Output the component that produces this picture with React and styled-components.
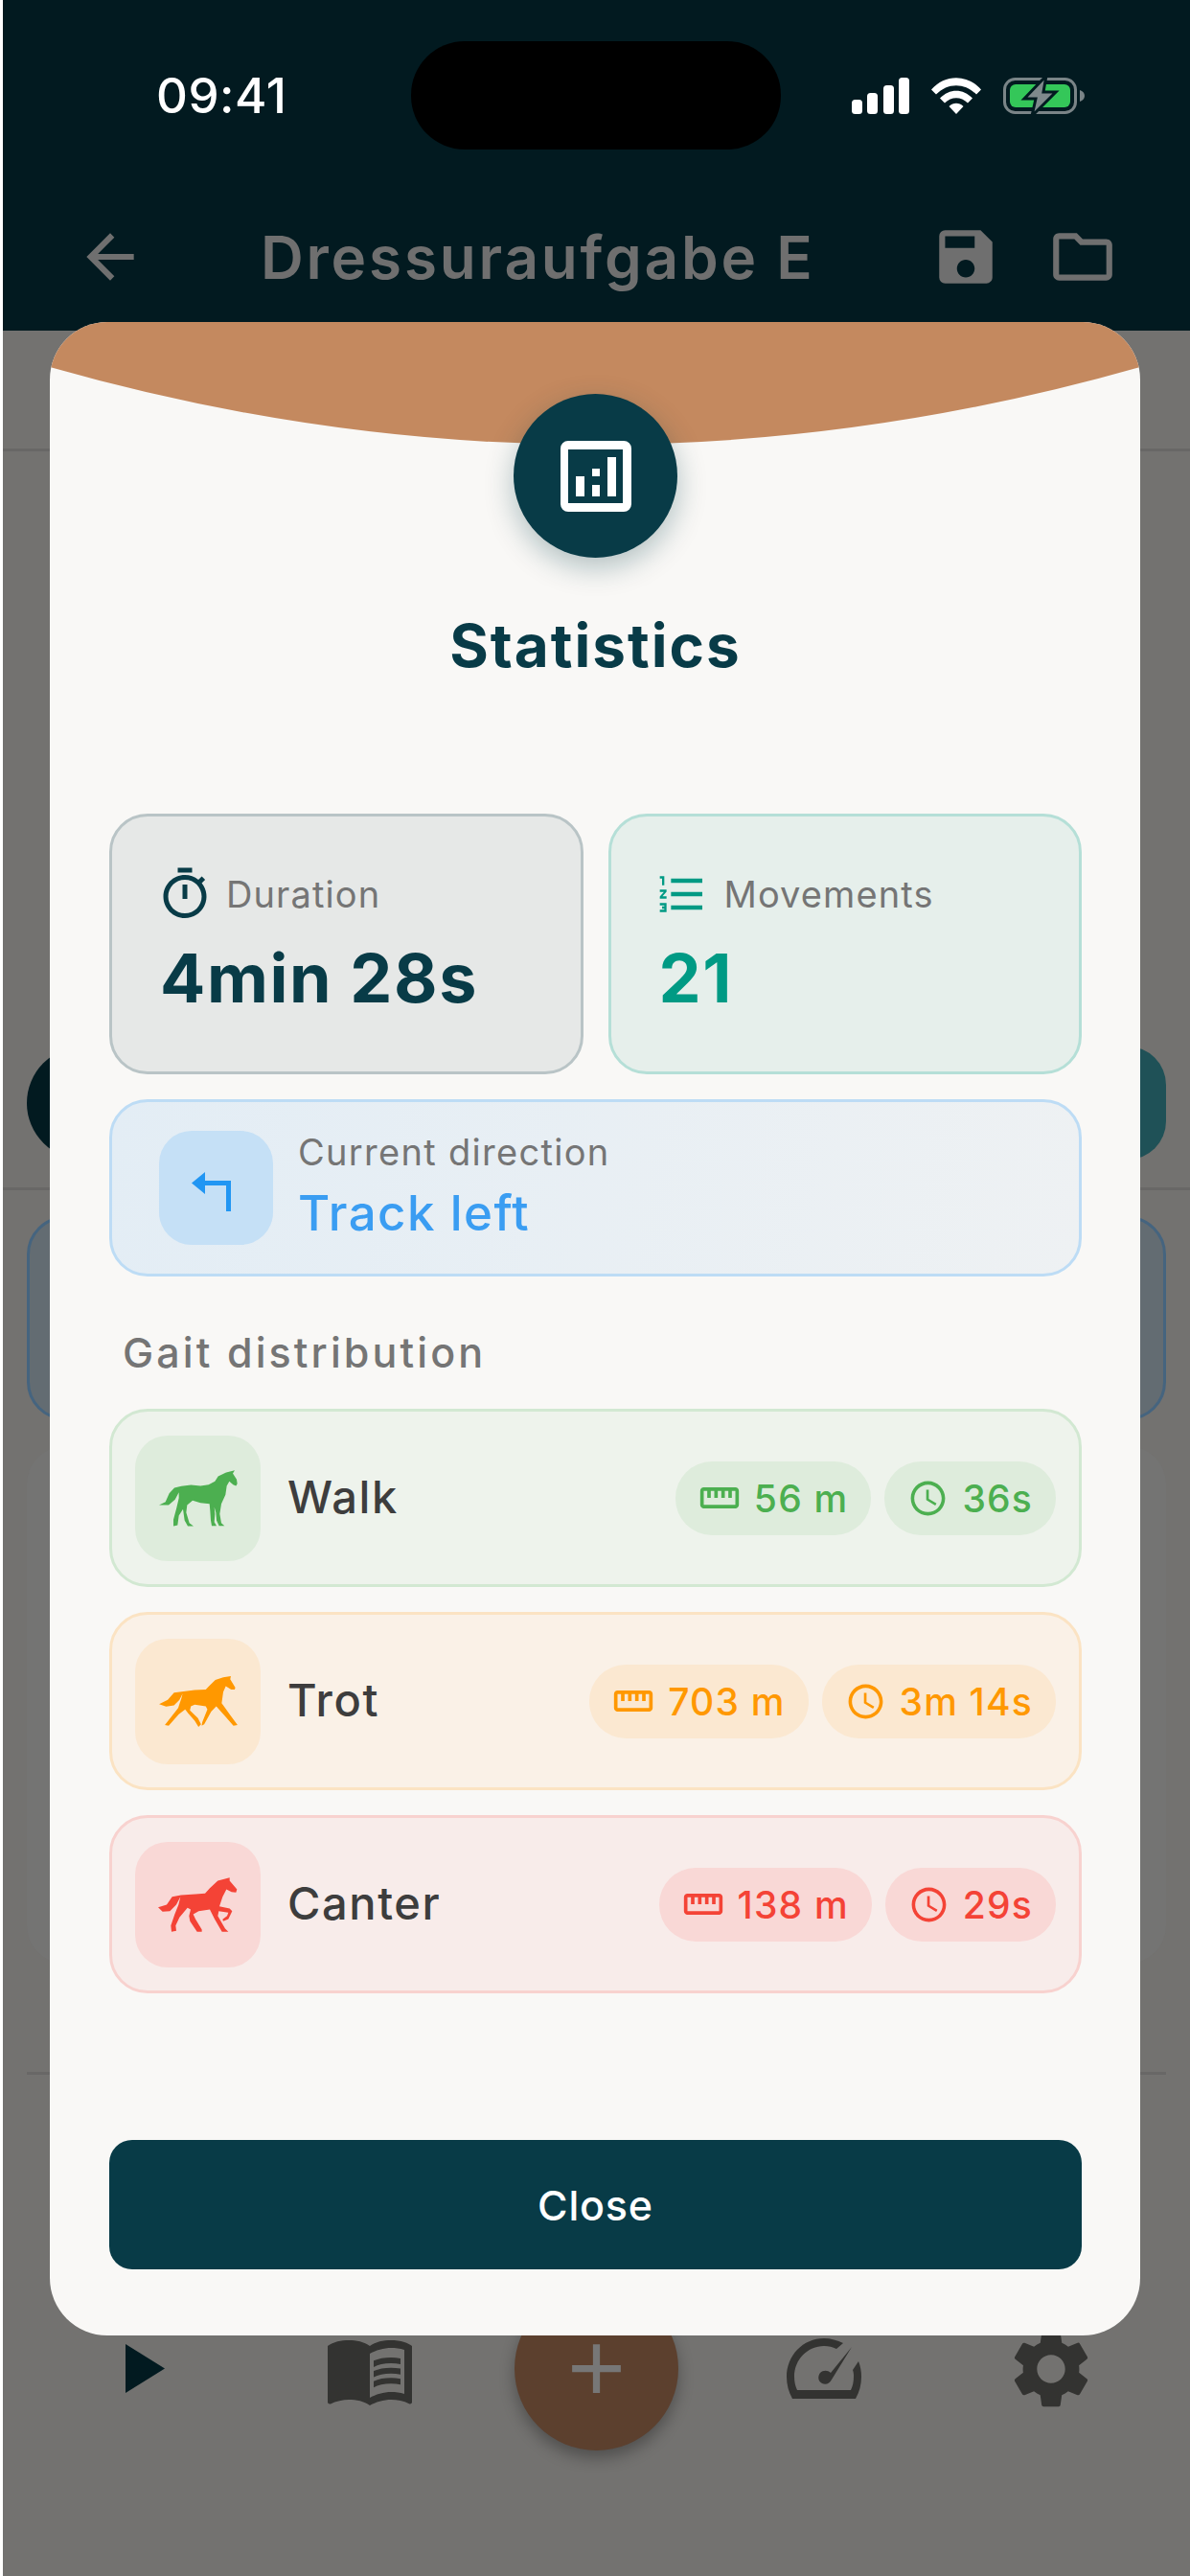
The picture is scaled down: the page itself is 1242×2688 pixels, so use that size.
import styled, { createGlobalStyle } from "styled-components";
import {
  MdArrowBack,
  MdSave,
  MdOutlineFolder,
  MdMenuBook,
  MdSettings,
  MdAdd,
  MdOutlineTimer,
  MdFormatListNumbered,
  MdOutlineStraighten,
  MdOutlineAccessTime,
} from "react-icons/md";

const GlobalStyle = createGlobalStyle`
  html, body { margin: 0; padding: 0; background: #fff; }
  * { box-sizing: border-box; }
  body { font-family: Inter, "Noto Sans", sans-serif; }
`;

// --- horses, traced one by one ---
const HORSES = {
  walk: {
    box: "110 163 246 176",
    w: 82,
    h: 59,
    d: "M110 272 L130 262 L142 235 L158 218 L180 213 L210 209 L240 212 L265 208 L285 198 L295 182 L320 170 L347 163 L341 173 L353 192 L355 205 L351 212 L342 208 L330 198 L322 212 L318 240 L305 268 L300 300 L305 328 L315 337 L298 337 L290 320 L288 295 L283 278 L285 300 L283 325 L290 337 L275 337 L272 320 L270 290 L268 268 L240 265 L215 258 L198 272 L195 295 L205 328 L218 338 L200 338 L190 320 L185 285 L172 305 L168 335 L155 338 L155 318 L165 280 L172 250 L172 232 L160 255 L140 272 Z",
  },
  trot: {
    box: "48 60 247 160",
    w: 82,
    h: 53,
    d: "M48 148 L75 135 L95 112 L125 108 L160 104 L195 102 L205 92 L225 72 L250 64 L274 60 L272 70 L288 96 L286 102 L275 102 L258 92 L250 110 L245 145 L270 180 L295 214 L282 216 L255 185 L228 155 L212 172 L190 212 L182 216 L184 205 L200 165 L195 155 L160 150 L148 155 L145 168 L170 192 L180 212 L172 220 L160 200 L140 178 L130 165 L110 180 L78 216 L66 214 L85 190 L108 160 L118 130 L122 115 L112 135 L95 152 L70 156 Z",
  },
  canter: {
    box: "48 685 249 170",
    w: 83,
    h: 57,
    d: "M48 778 L75 770 L92 745 L120 740 L165 737 L195 735 L210 718 L235 695 L272 685 L272 695 L295 722 L292 732 L278 730 L262 722 L250 745 L240 775 L272 782 L280 790 L268 815 L252 822 L250 816 L264 805 L268 795 L238 790 L235 805 L258 845 L268 855 L248 855 L225 815 L210 785 L175 790 L158 800 L165 815 L185 848 L185 855 L170 855 L148 822 L145 805 L150 785 L140 780 L115 810 L103 835 L105 852 L90 855 L88 835 L100 800 L112 770 L118 745 L105 770 L85 790 L62 792 Z",
  },
};

const HorseIcon = ({ gait }) => {
  const horse = HORSES[gait];
  return (
    <svg width={horse.w} height={horse.h} viewBox={horse.box} fill="currentColor">
      <path d={horse.d} />
    </svg>
  );
};

const SignalIcon = () => (
  <svg width="60" height="38" viewBox="0 0 60 38" fill="#fff">
    <rect x="0" y="23" width="11" height="15" rx="3.5" />
    <rect x="16" y="16" width="11" height="22" rx="3.5" />
    <rect x="33" y="8" width="11" height="30" rx="3.5" />
    <rect x="49" y="0" width="11" height="38" rx="3.5" />
  </svg>
);

const WifiIcon = () => (
  <svg width="52" height="38" viewBox="0 0 52 38" fill="#fff">
    <path d="M0 12.5 C14 -4 38 -4 52 12.5 L47 17.5 C35 5 17 5 5 17.5 Z" />
    <path d="M9 21.5 C19 11 33 11 43 21.5 L38 26.5 C31 19.5 21 19.5 14 26.5 Z" />
    <path d="M18.5 30 C23 25.8 29 25.8 33.5 30 L26 38 Z" />
  </svg>
);

const BatteryIcon = () => (
  <svg width="85" height="42" viewBox="0 0 85 42">
    <rect x="1.5" y="3.5" width="74" height="35" rx="11" fill="none" stroke="#7a8487" strokeWidth="3" />
    <rect x="7" y="9" width="63" height="24" rx="6" fill="#34c759" />
    <path d="M80 15 C83 16 85 18 85 21 C85 24 83 26 80 27 Z" fill="#7a8487" />
    <path d="M45 0 L22 24 H34 L30 42 L55 17 H42 Z" fill="#7f898c" stroke="#021a20" strokeWidth="3" />
  </svg>
);

const ChartIcon = () => (
  <svg width="74" height="74" viewBox="0 0 74 74" fill="#fff">
    <path
      fillRule="evenodd"
      d="M8 0 H66 A8 8 0 0 1 74 8 V66 A8 8 0 0 1 66 74 H8 A8 8 0 0 1 0 66 V8 A8 8 0 0 1 8 0 Z M8 9 V65 H65 V9 Z"
    />
    <rect x="16" y="37" width="9" height="21" />
    <rect x="33" y="29" width="8" height="8" />
    <rect x="33" y="46" width="8" height="12" />
    <rect x="49" y="17" width="9" height="41" />
  </svg>
);

const TurnIcon = () => (
  <svg width="41" height="41" viewBox="0 0 41 41" fill="currentColor">
    <path d="M41 41 H36 V14 H14 V23 L0 11.5 L14 0 V9 H41 Z" />
  </svg>
);

const PlayIcon = () => (
  <svg width="41" height="51" viewBox="0 0 41 51" fill="#021a20">
    <path d="M0 0 L41 25.5 L0 51 Z" />
  </svg>
);

const GaugeIcon = () => (
  <svg width="78" height="64" viewBox="0 0 78 64" fill="#333331">
    <path d="M39 0 C17 0 0 18 0 40 C0 48 2 56 6 63 H72 C76 56 78 48 78 40 C78 34 77 29 75 24 L69 33 C70 36 70 38 70 40 C70 45 69 50 67 54 H11 C9 50 8 45 8 40 C8 22 22 8 39 8 C44 8 48 9 52 11 L59 5 C53 2 46 0 39 0 Z" />
    <path d="M68 9 L46 36 C43 33 38 33 35 36 C32 40 33 45 37 47 C41 49 45 47 47 43 Z" />
  </svg>
);

const GAITS = [
  { key: "walk", name: "Walk", dist: "56 m", time: "36s", tone: "green" },
  { key: "trot", name: "Trot", dist: "703 m", time: "3m 14s", tone: "orange" },
  { key: "canter", name: "Canter", dist: "138 m", time: "29s", tone: "red" },
];

const App = () => (
  <Page>
    <GlobalStyle />
    <Screen>
      <TopBar>
        <StatusBar>
          <Time>09:41</Time>
          <Notch />
          <StatusIcons>
            <SignalIcon />
            <WifiIcon />
            <BatteryIcon />
          </StatusIcons>
        </StatusBar>
        <AppBar>
          <MdArrowBack size={74} />
          <AppTitle>Dressuraufgabe E</AppTitle>
          <AppActions>
            <MdSave size={74} />
            <MdOutlineFolder size={74} />
          </AppActions>
        </AppBar>
      </TopBar>

      {/* what is left visible of the page behind the dialog */}
      <Backdrop>
        <TabStrip />
        <ControlRow>
          <DarkPill />
          <TealPill />
        </ControlRow>
        <RowLine />
        <BlueCard />
        <FaintCard />
        <NavLine />
        <BottomNav>
          <NavSlot $shift={5}>
            <PlayIcon />
          </NavSlot>
          <NavSlot $color="#333331">
            <MdMenuBook size={96} />
          </NavSlot>
          <NavSlot>
            <Fab>
              <MdAdd size={87} />
            </Fab>
          </NavSlot>
          <NavSlot>
            <GaugeIcon />
          </NavSlot>
          <NavSlot $color="#333331">
            <MdSettings size={98} />
          </NavSlot>
        </BottomNav>
      </Backdrop>

      <Dialog>
        <Cap viewBox="0 0 1138 128" preserveAspectRatio="none">
          <path d="M0 0 H1138 V47 Q569 209 0 47 Z" fill="#c4895f" />
        </Cap>
        <Badge>
          <ChartIcon />
        </Badge>
        <DialogTitle>Statistics</DialogTitle>

        <StatGrid>
          <StatCard $bg="#e6e8e7" $border="#b9c4c6">
            <StatLabel>
              <IconTint $color="#083b47">
                <MdOutlineTimer size={60} />
              </IconTint>
              Duration
            </StatLabel>
            <StatValue $color="#083b47">4min 28s</StatValue>
          </StatCard>
          <StatCard $bg="#e6efeb" $border="#b5dfd7">
            <StatLabel>
              <IconTint $color="#009a84" $gap={3}>
                <MdFormatListNumbered size={56} />
              </IconTint>
              Movements
            </StatLabel>
            <StatValue $color="#009a84">21</StatValue>
          </StatCard>
        </StatGrid>

        <DirectionCard>
          <DirectionBox>
            <TurnIcon />
          </DirectionBox>
          <div>
            <DirectionLabel>Current direction</DirectionLabel>
            <DirectionValue>Track left</DirectionValue>
          </div>
        </DirectionCard>

        <SectionTitle>Gait distribution</SectionTitle>
        <GaitList>
          {GAITS.map((g) => (
            <GaitRow key={g.key} $tone={g.tone}>
              <GaitBox $tone={g.tone}>
                <HorseIcon gait={g.key} />
              </GaitBox>
              <GaitName>{g.name}</GaitName>
              <Pill $tone={g.tone}>
                <MdOutlineStraighten size={44} />
                {g.dist}
              </Pill>
              <Pill $tone={g.tone}>
                <MdOutlineAccessTime size={43} />
                {g.time}
              </Pill>
            </GaitRow>
          ))}
        </GaitList>

        <CloseButton>Close</CloseButton>
      </Dialog>
    </Screen>
  </Page>
);

export default App;

// --- Styled Components ---

const TONES = {
  green: { row: "#eef3ec", border: "#d2e8d2", soft: "#deecdc", main: "#4caf50" },
  orange: { row: "#faf1e7", border: "#fbe3c3", soft: "#fbe8d1", main: "#ff9800" },
  red: { row: "#f8ecea", border: "#f8d2cf", soft: "#f9d8d6", main: "#f44336" },
};

const Page = styled.div`
  width: 1242px;
  height: 2688px;
  padding-left: 3px;
  background: #fff;
  overflow: hidden;
`;

const Screen = styled.div`
  position: relative;
  height: 100%;
  background: #737270;
`;

const TopBar = styled.header`
  height: 345px;
  padding-top: 43px;
  background: #021a20;
  color: #6f6f6f;
`;

const StatusBar = styled.div`
  display: flex;
  align-items: center;
  height: 113px;
  padding-left: 160px;
`;

const Time = styled.span`
  width: 266px;
  color: #fff;
  font-size: 51px;
  font-weight: 500;
  letter-spacing: 0.5px;
`;

const Notch = styled.div`
  width: 386px;
  height: 113px;
  border-radius: 56px;
  background: #000;
`;

const StatusIcons = styled.div`
  display: flex;
  align-items: center;
  gap: 23px;
  margin-left: 74px;
`;

const AppBar = styled.div`
  display: flex;
  align-items: center;
  padding: 0 75px;
  margin-top: 75px;
  height: 74px;
`;

const AppTitle = styled.h1`
  margin: 0 0 0 120px;
  font-size: 62px;
  font-weight: 600;
  letter-spacing: 2.8px;
  white-space: nowrap;
`;

const AppActions = styled.div`
  display: flex;
  gap: 48px;
  margin-left: auto;
`;

const Backdrop = styled.div`
  display: flex;
  flex-direction: column;
  padding: 0 25px;
`;

const TabStrip = styled.div`
  height: 126px;
  margin: 0 -25px;
  border-bottom: 3px solid #686766;
`;

const ControlRow = styled.div`
  display: flex;
  justify-content: space-between;
  margin-top: 621px;
`;

const DarkPill = styled.div`
  width: 300px;
  height: 118px;
  border-radius: 59px;
  background: #021a20;
`;

const TealPill = styled.div`
  width: 300px;
  height: 118px;
  border-radius: 40px;
  background: #1f5157;
`;

const RowLine = styled.div`
  height: 3px;
  margin: 29px -25px 0;
  background: #686766;
`;

const BlueCard = styled.div`
  height: 213px;
  margin-top: 27px;
  border: 3px solid #45647f;
  border-radius: 40px;
  background: #636c72;
`;

const FaintCard = styled.div`
  height: 540px;
  margin-top: 27px;
  border-radius: 40px;
  background: #747473;
`;

const NavLine = styled.div`
  height: 3px;
  margin-top: 113px;
  background: #686766;
`;

const BottomNav = styled.nav`
  display: grid;
  grid-template-columns: repeat(5, 237px);
  height: 171px;
  margin: 221px 0 0 2px;
`;

const NavSlot = styled.div`
  display: flex;
  align-items: center;
  justify-content: center;
  padding-left: ${(p) => p.$shift || 0}px;
  color: ${(p) => p.$color || "#777"};
`;

const Fab = styled.div`
  display: flex;
  align-items: center;
  justify-content: center;
  width: 171px;
  height: 171px;
  border-radius: 50%;
  background: #5c402e;
  color: #777;
  box-shadow: 0 8px 16px rgba(0, 0, 0, 0.3);
`;

const Dialog = styled.section`
  position: absolute;
  top: 336px;
  left: 49px;
  width: 1138px;
  height: 2101px;
  display: flex;
  flex-direction: column;
  align-items: center;
  padding: 75px 61px 0 62px;
  border-radius: 60px;
  background: #f9f8f6;
  overflow: hidden;
`;

const Cap = styled.svg`
  position: absolute;
  top: 0;
  left: 0;
  width: 100%;
  height: 128px;
`;

const Badge = styled.div`
  position: relative;
  display: flex;
  flex-shrink: 0;
  align-items: center;
  justify-content: center;
  width: 171px;
  height: 171px;
  border-radius: 50%;
  background: #083b47;
  box-shadow: 0 10px 30px rgba(8, 59, 71, 0.3);
`;

const DialogTitle = styled.h2`
  margin: 56px 0 0;
  color: #083b47;
  font-size: 62px;
  line-height: 72px;
  font-weight: 700;
  letter-spacing: 2px;
`;

const StatGrid = styled.div`
  display: grid;
  grid-template-columns: 1fr 1fr;
  gap: 26px;
  width: 100%;
  margin-top: 139px;
`;

const StatCard = styled.div`
  height: 272px;
  padding: 51px 0 0 50px;
  border: 3px solid ${(p) => p.$border};
  border-radius: 40px;
  background: ${(p) => p.$bg};
`;

const StatLabel = styled.div`
  display: flex;
  align-items: center;
  gap: 13px;
  height: 60px;
  margin-left: -4px;
  color: #757575;
  font-size: 38px;
  letter-spacing: 1.1px;
`;

const IconTint = styled.span`
  display: flex;
  margin-right: ${(p) => p.$gap || 0}px;
  color: ${(p) => p.$color};
`;

const StatValue = styled.div`
  margin-top: 17px;
  color: ${(p) => p.$color};
  font-size: 70px;
  line-height: 82px;
  font-weight: 700;
  letter-spacing: 1.6px;
`;

const DirectionCard = styled.div`
  display: flex;
  align-items: center;
  gap: 26px;
  width: 100%;
  height: 185px;
  margin-top: 26px;
  padding-left: 49px;
  border: 3px solid #bddcf5;
  border-radius: 40px;
  background: linear-gradient(100deg, #e3edf5, #eef1f3);
`;

const DirectionBox = styled.div`
  display: flex;
  align-items: center;
  justify-content: center;
  width: 119px;
  height: 119px;
  padding: 8px 10px 0 0;
  border-radius: 34px;
  background: #c5e0f6;
  color: #2196f3;
`;

const DirectionLabel = styled.div`
  margin-top: -4px;
  color: #757575;
  font-size: 38px;
  line-height: 44px;
  letter-spacing: 1.3px;
`;

const DirectionValue = styled.div`
  margin-top: 12px;
  color: #3a9df2;
  font-size: 51px;
  line-height: 60px;
  font-weight: 500;
  letter-spacing: 1.4px;
`;

const SectionTitle = styled.h3`
  align-self: flex-start;
  margin: 54px 0 0 14px;
  color: #757575;
  font-size: 43px;
  line-height: 50px;
  font-weight: 500;
  letter-spacing: 3.1px;
`;

const GaitList = styled.div`
  display: flex;
  flex-direction: column;
  gap: 26px;
  width: 100%;
  margin-top: 34px;
`;

const GaitRow = styled.div`
  display: flex;
  align-items: center;
  gap: 14px;
  height: 186px;
  padding: 0 24px;
  border: 3px solid ${(p) => TONES[p.$tone].border};
  border-radius: 40px;
  background: ${(p) => TONES[p.$tone].row};
`;

const GaitBox = styled.div`
  display: flex;
  flex-shrink: 0;
  align-items: center;
  justify-content: center;
  width: 131px;
  height: 131px;
  border-radius: 34px;
  background: ${(p) => TONES[p.$tone].soft};
  color: ${(p) => TONES[p.$tone].main};
`;

const GaitName = styled.span`
  flex: 1;
  margin: -4px 0 0 14px;
  color: #3d3d3d;
  font-size: 47px;
  font-weight: 500;
  letter-spacing: 1.6px;
`;

const Pill = styled.span`
  display: flex;
  align-items: center;
  gap: 14px;
  height: 77px;
  padding: 0 24px;
  border-radius: 38px;
  background: ${(p) => TONES[p.$tone].soft};
  color: ${(p) => TONES[p.$tone].main};
  font-size: 39px;
  font-weight: 500;
  letter-spacing: 1.2px;
`;

const CloseButton = styled.button`
  flex-shrink: 0;
  width: 100%;
  height: 135px;
  margin-top: 153px;
  border: none;
  border-radius: 24px;
  background: #083b47;
  color: #fff;
  font-family: inherit;
  font-size: 43px;
  font-weight: 500;
  letter-spacing: 0.8px;
`;
